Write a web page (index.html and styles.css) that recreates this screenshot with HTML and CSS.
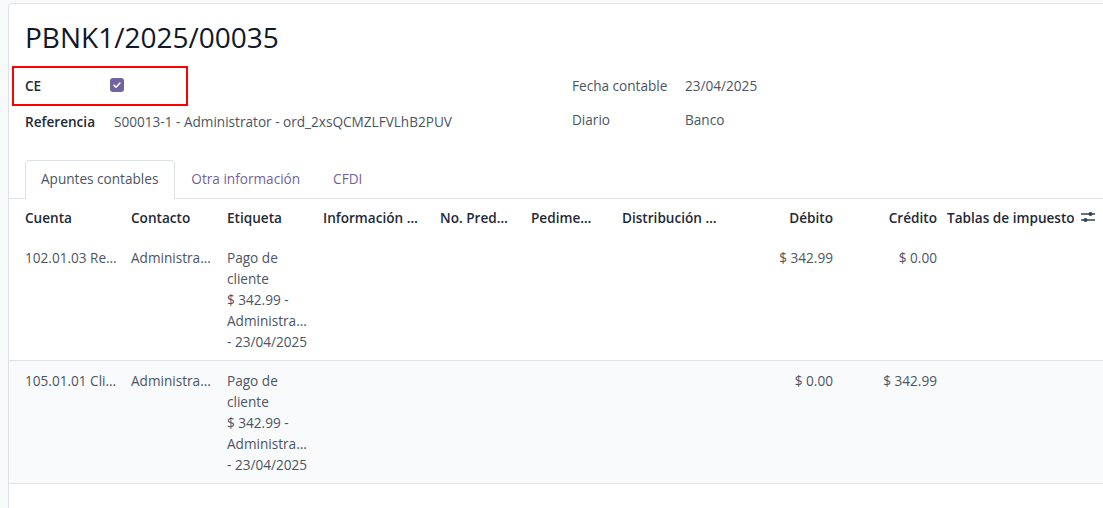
FILE: index.html
```html
<!DOCTYPE html>
<html lang="es">
<head>
<meta charset="utf-8">
<title>PBNK1/2025/00035</title>
<link rel="stylesheet" href="styles.css">
</head>
<body>
<div class="page">
  <div class="sheet">
    <h1 class="title">PBNK1/2025/00035</h1>
    <div class="groups">
      <div class="group group-left">
        <div class="field-row">
          <span class="label">CE</span>
          <span class="checkbox">
            <svg viewBox="0 0 14 14" width="14" height="14"><path d="M4 7.2l2 2 4-4.2" fill="none" stroke="#fff" stroke-width="1.6" stroke-linecap="round" stroke-linejoin="round"/></svg>
          </span>
          <span class="highlight"></span>
        </div>
        <div class="field-row">
          <span class="label">Referencia</span>
          <span class="value">S00013-1 - Administrator - ord_2xsQCMZLFVLhB2PUV</span>
        </div>
      </div>
      <div class="group group-right">
        <div class="field-row field-row-right">
          <span class="label label-light">Fecha contable</span>
          <span class="value">23/04/2025</span>
        </div>
        <div class="field-row field-row-right">
          <span class="label label-light">Diario</span>
          <span class="value">Banco</span>
        </div>
      </div>
    </div>

    <div class="tabs">
      <div class="tab tab-active">Apuntes contables</div>
      <div class="tab">Otra información</div>
      <div class="tab">CFDI</div>
    </div>

    <table class="lines">
      <colgroup>
        <col class="c-cuenta"><col class="c-contacto"><col class="c-etiqueta"><col class="c-info">
        <col class="c-pred"><col class="c-pedi"><col class="c-dist"><col class="c-deb">
        <col class="c-cred"><col class="c-tax">
      </colgroup>
      <thead>
        <tr>
          <th class="first">Cuenta</th>
          <th>Contacto</th>
          <th>Etiqueta</th>
          <th>Información …</th>
          <th>No. Pred…</th>
          <th>Pedime…</th>
          <th>Distribución …</th>
          <th class="num">Débito</th>
          <th class="num">Crédito</th>
          <th class="tax">Tablas de impuestos
            <span class="opt-icon">
              <svg viewBox="0 0 16 16" width="16" height="16"><path d="M1 5h14M1 11h14" stroke="#374151" stroke-width="1.3"/><circle cx="10.5" cy="5" r="2" fill="#374151"/><circle cx="5.5" cy="11" r="2" fill="#374151"/></svg>
            </span>
          </th>
        </tr>
      </thead>
      <tbody>
        <tr>
          <td class="first">102.01.03 Re…</td>
          <td>Administra…</td>
          <td class="wrap"><span>Pago de</span><span>cliente</span><span>$ 342.99 -</span><span>Administra…</span><span>- 23/04/2025</span></td>
          <td></td><td></td><td></td><td></td>
          <td class="num">$ 342.99</td>
          <td class="num">$ 0.00</td>
          <td></td>
        </tr>
        <tr class="odd">
          <td class="first">105.01.01 Cli…</td>
          <td>Administra…</td>
          <td class="wrap"><span>Pago de</span><span>cliente</span><span>$ 342.99 -</span><span>Administra…</span><span>- 23/04/2025</span></td>
          <td></td><td></td><td></td><td></td>
          <td class="num">$ 0.00</td>
          <td class="num">$ 342.99</td>
          <td></td>
        </tr>
      </tbody>
    </table>
  </div>
</div>
</body>
</html>
```

FILE: styles.css
```css
* { box-sizing: border-box; }
html, body {
  margin: 0;
  padding: 0;
  width: 1103px;
  height: 508px;
  overflow: hidden;
  background: #f8f9fa;
}
body {
  font-family: "Open Sans", "Noto Sans", sans-serif;
  font-size: 13.6px;
  color: #374151;
}
.page {
  padding: 3px 0 0 8px;
}
.sheet {
  width: 1130px;
  min-height: 560px;
  background: #fff;
  border: 1px solid #dee2e6;
  border-radius: 4px 0 0 0;
  padding-top: 16px;
}
.title {
  margin: 0 0 13px 16px;
  font-size: 28px;
  line-height: 34px;
  font-weight: 500;
  color: #111827;
}
.groups {
  display: grid;
  grid-template-columns: 547px 1fr;
  padding-left: 16px;
}
.field-row {
  position: relative;
  display: flex;
  align-items: center;
  height: 36px;
}
.field-row-right { height: 34px; }
.group-right { padding-top: 1px; }
.label {
  width: 85px;
  flex: none;
  font-weight: 600;
  color: #1f2937;
}
.group-right .label { width: 113px; }
.label-light {
  font-weight: 400;
  color: #4b5563;
}
.group-right .label-light { color: #4b5563; }
.value {
  color: #4b5563;
  padding-left: 4px;
}
.group-right .value { padding-left: 0; }
.checkbox {
  display: inline-flex;
  width: 14px;
  height: 14px;
  border-radius: 3px;
  background: #71639e;
}
.highlight {
  position: absolute;
  left: -13px;
  top: -1px;
  width: 176px;
  height: 40px;
  border: 2px solid #f00;
}
.tabs {
  display: flex;
  margin-top: 21px;
  padding-left: 16px;
  border-bottom: 1px solid #dee2e6;
  height: 39px;
}
.tab {
  height: 39px;
  line-height: 36px;
  padding: 0 16px 0 15px;
  color: #71639e;
  border: 1px solid transparent;
  border-bottom: 0;
}
.tab-active {
  color: #4b5563;
  background: #fff;
  border-color: #dee2e6;
  border-radius: 4px 4px 0 0;
  margin-bottom: -1px;
}
.lines {
  border-collapse: collapse;
  table-layout: fixed;
  width: 1128px;
}
.c-cuenta { width: 118px; }
.c-contacto { width: 96px; }
.c-etiqueta { width: 96px; }
.c-info { width: 117px; }
.c-pred { width: 91px; }
.c-pedi { width: 91px; }
.c-dist { width: 115px; }
.c-deb { width: 104px; }
.c-cred { width: 104px; }
.c-tax { width: 196px; }
th, td {
  padding: 0 4px;
  text-align: left;
  white-space: nowrap;
  overflow: hidden;
  text-overflow: ellipsis;
}
th {
  height: 39px;
  padding-bottom: 3px;
  font-weight: 600;
  color: #1f2937;
  vertical-align: middle;
}
th.first, td.first { padding-left: 16px; }
.num { text-align: right; }
th.tax {
  position: relative;
  padding-left: 6px;
  overflow: visible;
}
.opt-icon {
  position: absolute;
  left: 133px;
  top: 10px;
  width: 24px;
  height: 16px;
  padding-left: 6px;
  background: #fff;
}
.opt-icon svg { display: block; }
tbody tr { border-bottom: 1px solid #dee2e6; }
tbody tr.odd { background: #f9fafb; }
td {
  vertical-align: top;
  padding-top: 9px;
  padding-bottom: 8px;
  line-height: 21px;
  color: #4b5563;
}
td.wrap span {
  display: block;
  overflow: hidden;
  text-overflow: ellipsis;
}
```
